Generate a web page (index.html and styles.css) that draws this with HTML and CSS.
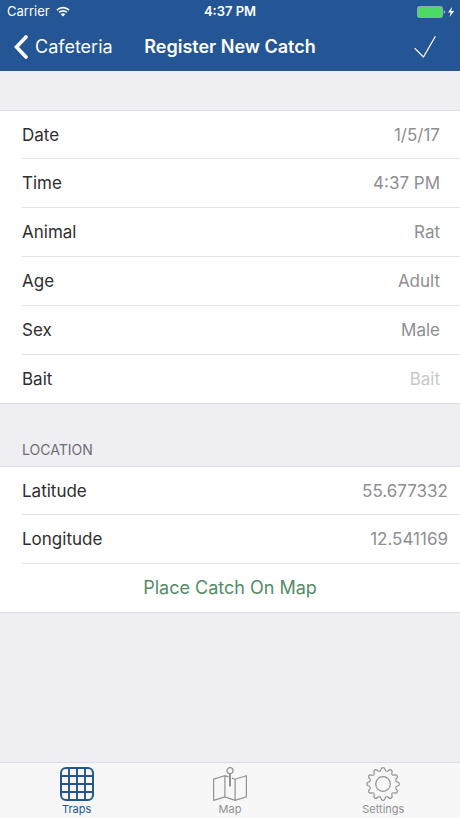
FILE: index.html
```html
<!DOCTYPE html>
<html lang="en">
<head>
<meta charset="utf-8">
<meta name="viewport" content="width=device-width, initial-scale=1">
<title>Register New Catch</title>
<link rel="stylesheet" href="styles.css">
</head>
<body>
<header class="top">
  <div class="status">
    <div class="status-left">
      <span>Carrier</span>
      <svg width="14" height="11" viewBox="0 0 14 11" aria-hidden="true">
        <g fill="none" stroke="#fff" stroke-width="1.7">
          <path d="M1 4.1a8.6 8.6 0 0 1 12 0"/>
          <path d="M3.2 6.4a5.4 5.4 0 0 1 7.6 0"/>
        </g>
        <path d="M7 10.6 4.8 8.3a3.1 3.1 0 0 1 4.4 0z" fill="#fff"/>
      </svg>
    </div>
    <span class="clock">4:37 PM</span>
    <div class="status-right">
      <svg width="38" height="12" viewBox="0 0 38 12" aria-hidden="true">
        <rect x=".5" y=".5" width="25" height="11" rx="1.8" fill="#4cd964" stroke="#8fa9b8"/>
        <path d="M26.8 4c1.4.5 1.4 3.500 0 4z" fill="#cfdae8"/>
        <path d="M35 1l-4 5.600h2.700L32.500 11l4.700-6h-2.900z" fill="#fff"/>
      </svg>
    </div>
  </div>
  <nav class="navbar">
    <a class="back" href="#traps">
      <svg width="14" height="24" viewBox="0 0 14 24" aria-hidden="true"><path d="M12 2 2.500 12 12 22" fill="none" stroke="#fff" stroke-width="3.600" stroke-linecap="round" stroke-linejoin="miter"/></svg>
      <span>Cafeteria</span>
    </a>
    <h1>Register New Catch</h1>
    <button class="done" type="submit" form="catch" aria-label="Save">
      <svg width="22" height="24" viewBox="0 0 22 24" aria-hidden="true"><path d="M.6 13.200 9.400 22 21.400 1.300" fill="none" stroke="#fff" stroke-width="1.200"/></svg>
    </button>
  </nav>
</header>

<main>
  <form id="catch">
    <div class="group">
      <div class="row"><label for="date">Date</label><input id="date" type="text" value="1/5/17"></div>
      <div class="row"><label for="time">Time</label><input id="time" type="text" value="4:37 PM"></div>
      <div class="row"><label for="animal">Animal</label><input id="animal" type="text" value="Rat"></div>
      <div class="row"><label for="age">Age</label><input id="age" type="text" value="Adult"></div>
      <div class="row"><label for="sex">Sex</label><input id="sex" type="text" value="Male"></div>
      <div class="row"><label for="bait">Bait</label><input id="bait" type="text" placeholder="Bait"></div>
    </div>
    <h2>LOCATION</h2>
    <div class="group location">
      <div class="row"><label for="lat">Latitude</label><input id="lat" type="text" value="55.677332"></div>
      <div class="row"><label for="lng">Longitude</label><input id="lng" type="text" value="12.541169"></div>
      <div class="row"><button class="place" type="button">Place Catch On Map</button></div>
    </div>
  </form>
</main>

<nav class="tabs">
  <a class="tab active" href="#traps">
    <svg width="34" height="34" viewBox="0 0 34 34" fill="none" stroke="currentColor" aria-hidden="true">
      <rect x="1" y="1" width="32" height="32" rx="5" stroke-width="2"/>
      <path d="M9 1v32M17 1v32M25 1v32M1 9h32M1 17h32M1 25h32" stroke-width="1.900"/>
    </svg>
    <span>Traps</span>
  </a>
  <a class="tab" href="#map">
    <svg width="34" height="34" viewBox="0 0 34 34" fill="none" stroke="currentColor" stroke-width="1.200" aria-hidden="true">
      <path d="M15.500 9.900 11.900 8.700.600 12.200v21.200l11.300-3.500 10.200 3.500 11.300-3.500V8.700l-11.300 3.500-3.200-1.100M11.900 8.700v21.200M22.100 12.200v21.200"/>
      <circle cx="17" cy="3.700" r="3"/>
      <path d="M17 6.700v12.800" stroke-width="2"/>
    </svg>
    <span>Map</span>
  </a>
  <a class="tab" href="#settings">
    <svg width="34" height="34" viewBox="-17 -17 34 34" fill="none" stroke="currentColor" stroke-width="1.200" aria-hidden="true">
      <defs><path id="tooth" d="M-3.400-12.700C-2.100-13.050-2.200-13.700-1.900-14.800Q-1.500-16.300 0-16.300Q1.500-16.300 1.900-14.800C2.200-13.700 2.100-13.050 3.400-12.700"/></defs>
      <use href="#tooth"/>
      <use href="#tooth" transform="rotate(30)"/>
      <use href="#tooth" transform="rotate(60)"/>
      <use href="#tooth" transform="rotate(90)"/>
      <use href="#tooth" transform="rotate(120)"/>
      <use href="#tooth" transform="rotate(150)"/>
      <use href="#tooth" transform="rotate(180)"/>
      <use href="#tooth" transform="rotate(210)"/>
      <use href="#tooth" transform="rotate(240)"/>
      <use href="#tooth" transform="rotate(270)"/>
      <use href="#tooth" transform="rotate(300)"/>
      <use href="#tooth" transform="rotate(330)"/>
      <circle r="7.300"/>
    </svg>
    <span>Settings</span>
  </a>
</nav>
</body>
</html>
```
FILE: styles.css
```css
* {
  box-sizing: border-box;
}

body {
  margin: 0;
  min-height: 100vh;
  display: flex;
  flex-direction: column;
  background: #eeeef3;
  color: #2e2e30;
  font: 17px/24px Inter, "Liberation Sans", sans-serif;
}

a {
  color: inherit;
  text-decoration: none;
}

button,
input {
  font: inherit;
  border: 0;
  padding: 0;
  background: none;
}

.top {
  background: #245594;
  color: #fff;
}

.status,
.navbar {
  display: grid;
  grid-template-columns: 1fr auto 1fr;
  align-items: center;
}

.status {
  height: 23px;
  padding: 0 5px;
  font-size: 13px;
  line-height: 23px;
}

.status-left {
  display: flex;
  align-items: center;
  gap: 6px;
  padding-left: 2px;
}

.clock {
  font-weight: 600;
}

.status-right {
  display: flex;
  justify-content: flex-end;
}

.navbar {
  height: 48px;
  padding: 0 14px;
  font-size: 18px;
}

.navbar h1 {
  margin: 0;
  font-size: 18px;
  font-weight: 600;
}

.back {
  display: flex;
  align-items: center;
  gap: 7px;
}

.done {
  display: flex;
  justify-self: end;
  padding-right: 10px;
}

.back svg,
.back span,
.done svg {
  flex: none;
}

main {
  flex: 1;
  padding-top: 39px;
}

.group {
  background: #fff;
}

.row {
  display: flex;
  align-items: center;
  height: 49px;
  margin-left: 22px;
  padding-right: 20px;
  border-bottom: 1px solid #e3e3e6;
}

.row:first-child,
.row:last-child {
  margin-left: 0;
  padding-left: 22px;
}

.row:first-child {
  border-top: 1px solid #dcdce0;
  border-bottom: 0;
}

.row:first-child + .row {
  border-top: 1px solid #e3e3e6;
  height: 50px;
  margin-top: -1px;
}

.row:last-child {
  border-color: #dcdce0;
}

.location .row {
  padding-right: 12px;
}

.location .row:last-child {
  padding: 0;
}

.row input {
  flex: 1;
  min-width: 0;
  color: #8e8e93;
  text-align: right;
  outline: 0;
}

.row input::placeholder {
  color: #c7c7cc;
  opacity: 1;
}

h2 {
  margin: 0;
  padding: 36px 22px 6px;
  color: #6d6d72;
  font-size: 14px;
  font-weight: 400;
  line-height: 20px;
}

.place {
  flex: 1;
  color: #528c66;
  font-size: 18px;
}

.tabs {
  display: grid;
  grid-template-columns: repeat(3, 1fr);
  border-top: 1px solid #dcdce0;
  background: #f7f7f8;
}

.tab {
  display: flex;
  flex-direction: column;
  align-items: center;
  padding: 4px 0 0;
  color: #929292;
  font-size: 11px;
  line-height: 17px;
}

.tab.active {
  color: #245594;
}
```
